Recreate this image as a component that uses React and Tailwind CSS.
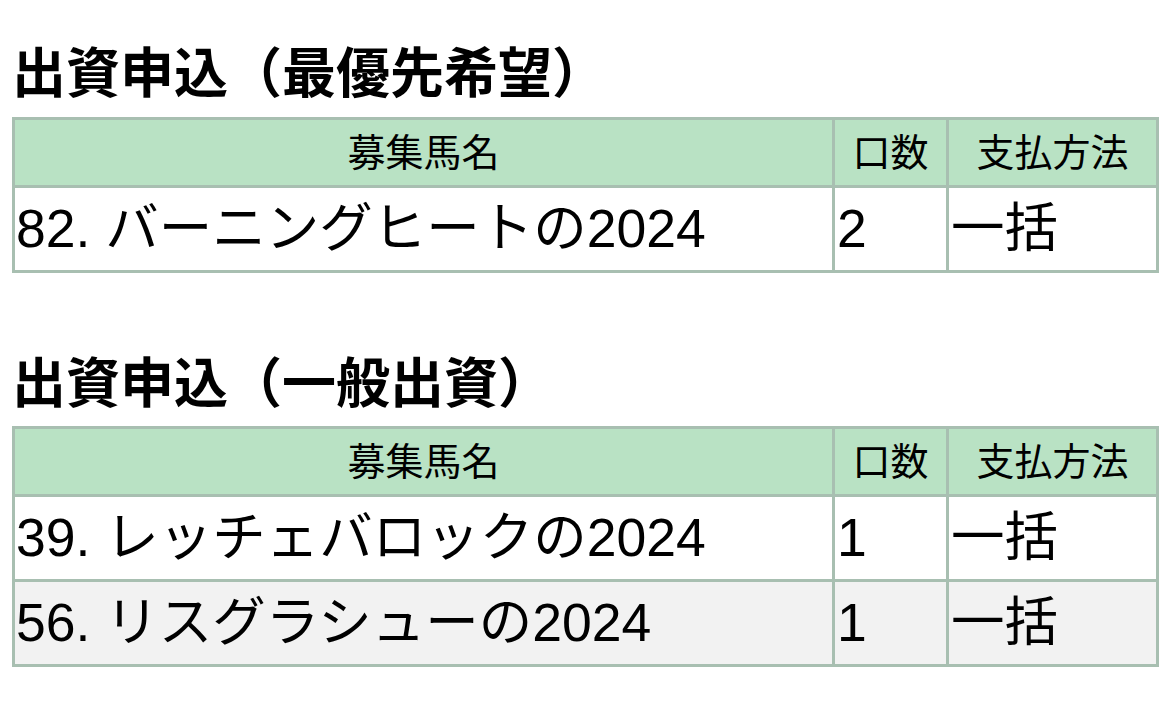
// App.jsx
const font = {
  fontFamily: '"Liberation Sans", "Noto Sans CJK JP", sans-serif',
};

const sections = [
  {
    title: "出資申込（最優先希望）",
    rows: [{ name: "82. バーニングヒートの2024", count: "2", pay: "一括" }],
  },
  {
    title: "出資申込（一般出資）",
    rows: [
      { name: "39. レッチェバロックの2024", count: "1", pay: "一括" },
      { name: "56. リスグラシューの2024", count: "1", pay: "一括" },
    ],
  },
];

const OrderTable = ({ rows }) => (
  <table className="border-separate border-spacing-0 border-l-[3px] border-t-[3px] border-[#a8bfb1] text-black">
    <thead>
      <tr className="bg-[#b9e2c4]">
        <th className="w-[820px] h-[68px] p-0 border-r-[3px] border-b-[3px] border-[#a8bfb1] text-[38px] font-normal text-center align-middle leading-none">
          募集馬名
        </th>
        <th className="w-[114px] h-[68px] p-0 border-r-[3px] border-b-[3px] border-[#a8bfb1] text-[38px] font-normal text-center align-middle leading-none">
          口数
        </th>
        <th className="w-[210px] h-[68px] p-0 border-r-[3px] border-b-[3px] border-[#a8bfb1] text-[38px] font-normal text-center align-middle leading-none">
          支払方法
        </th>
      </tr>
    </thead>
    <tbody>
      {rows.map((row, i) => (
        <tr key={row.name} className={i % 2 === 1 ? "bg-[#f2f2f2]" : "bg-white"}>
          <td className="h-[85px] pl-[1px] pr-0 py-0 border-r-[3px] border-b-[3px] border-[#a8bfb1] text-[53.5px] align-middle leading-none whitespace-nowrap">
            {row.name}
          </td>
          <td className="h-[85px] pl-[2px] pr-0 py-0 border-r-[3px] border-b-[3px] border-[#a8bfb1] text-[53.5px] align-middle leading-none">
            {row.count}
          </td>
          <td className="h-[85px] pl-[2px] pr-0 py-0 border-r-[3px] border-b-[3px] border-[#a8bfb1] text-[53.5px] align-middle leading-none">
            {row.pay}
          </td>
        </tr>
      ))}
    </tbody>
  </table>
);

export default function App() {
  return (
    <div className="min-h-screen bg-white pl-[12px] pt-[44px]" style={font}>
      <h2 className="text-[54px] font-bold leading-[61px] text-black mb-[12px]">
        {sections[0].title}
      </h2>
      <OrderTable rows={sections[0].rows} />
      <h2 className="text-[54px] font-bold leading-[61px] text-black mt-[81px] mb-[11px]">
        {sections[1].title}
      </h2>
      <OrderTable rows={sections[1].rows} />
    </div>
  );
}
